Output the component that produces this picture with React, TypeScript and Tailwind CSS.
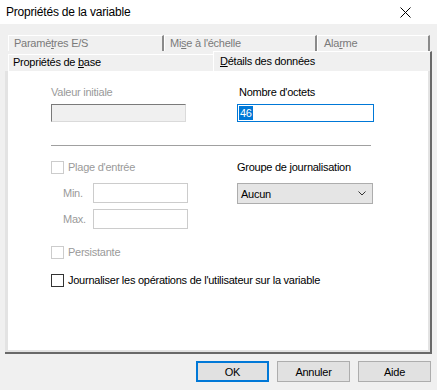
export default function App() {
  const disabled = "text-[#9a9a9a]";
  return (
    <div className="w-[437px] h-[390px] bg-[#f0f0f0] flex flex-col font-['Liberation_Sans',Arial,sans-serif] text-[11px] tracking-[-0.25px] text-black select-none overflow-hidden">
      {/* Title bar */}
      <div className="h-[24px] bg-white flex items-center justify-between pl-[6px] pr-[26px]">
        <span className="text-[12px] leading-[14px] tracking-[-0.2px] text-black">Propriétés de la variable</span>
        <svg width="11" height="11" viewBox="0 0 11 11" className="block">
          <path d="M0.5 0.5 L10.5 10.5 M10.5 0.5 L0.5 10.5" stroke="#000" strokeWidth="1" fill="none" />
        </svg>
      </div>

      {/* Tabs */}
      <div className="pt-[11px]">
        <div className="flex pl-[8px] h-[16px]">
          <div className="w-[156px] h-full bg-[#f0f0f0] border-t border-l border-white border-r-2 border-r-[#8a8a8a] pl-[5px] text-[#7a7a7a] leading-[14px]">
            Paramè<span className="underline">t</span>res E/S
          </div>
          <div className="w-[153px] h-full bg-[#f0f0f0] border-t border-l border-white border-r-2 border-r-[#8a8a8a] pl-[5px] text-[#7a7a7a] leading-[14px]">
            Mi<span className="underline">s</span>e à l'échelle
          </div>
          <div className="w-[113px] h-full bg-[#f0f0f0] border-t border-l border-white border-r-2 border-r-[#8a8a8a] pl-[6px] text-[#7a7a7a] leading-[14px]">
            Ala<span className="underline">r</span>me
          </div>
        </div>
        <div className="flex items-end h-[20px]">
          <div className="ml-[8px] w-[205px] h-[17px] bg-[#f0f0f0] border-t border-l border-white pl-[4px] leading-[15px]">
            Propriétés de <span className="underline">b</span>ase
          </div>
          <div className="w-[219px] h-[20px] bg-[#f0f0f0] border-t border-l border-white border-r-2 border-r-[#696969] pl-[6px] pt-[2px] leading-[15px]">
            <span className="underline">D</span>étails des données
          </div>
        </div>
      </div>

      {/* Panel */}
      <div className="ml-[5px] w-[427px] h-[283px] border-r-2 border-b-2 border-[#696969]">
        <div className="w-full h-full bg-white border-l-[3px] border-l-[#e3e3e3] border-r-2 border-b-2 border-[#e3e3e3] pl-[43px] pt-[14px]">
          {/* Row 1 */}
          <div className="flex">
            <div className="w-[135px] flex flex-col">
              <div className={`h-[14px] leading-[14px] ${disabled}`}>Valeur initiale</div>
              <div className="mt-[5px] h-[18px] bg-[#f0f0f0] border-t border-l border-[#7a7a7a] border-r border-b border-r-[#dadada] border-b-[#dadada]" />
            </div>
            <div className="ml-[51px] flex flex-col">
              <div className="h-[14px] leading-[14px] pl-[2px]">Nombre d'octets</div>
              <div className="mt-[5px] w-[137px] h-[18px] border border-[#0078d7] flex items-center pl-[1px]">
                <span className="bg-[#0078d7] text-white h-[14px] leading-[14px] px-[1px]">46</span>
              </div>
            </div>
          </div>

          {/* Separator */}
          <div className="mt-[23px] w-[320px] h-px bg-[#a0a0a0]" />

          {/* Row 2 */}
          <div className="flex mt-[14px]">
            <div className="w-[137px] flex flex-col">
              <div className="flex items-center h-[14px] gap-[4px]">
                <div className="w-[13px] h-[13px] border border-[#cccccc] bg-white" />
                <span className={`leading-[14px] ${disabled}`}>Plage d'entrée</span>
              </div>
              <div className="flex items-center mt-[9px] h-[20px]">
                <span className={`w-[42px] pl-[12px] leading-[14px] ${disabled}`}>Min.</span>
                <div className="w-[95px] h-[20px] border border-[#cccccc] bg-white" />
              </div>
              <div className="flex items-center mt-[6px] h-[20px]">
                <span className={`w-[42px] pl-[12px] leading-[14px] ${disabled}`}>Max.</span>
                <div className="w-[95px] h-[20px] border border-[#cccccc] bg-white" />
              </div>
            </div>
            <div className="ml-[49px] flex flex-col">
              <div className="h-[14px] leading-[14px]">Groupe de journalisation</div>
              <div className="mt-[9px] w-[136px] h-[21px] bg-[#e5e5e5] border border-[#adadad] flex items-center justify-between pl-[3px] pr-[6px]">
                <span className="leading-[14px]">Aucun</span>
                <svg width="8" height="5" viewBox="0 0 8 5" className="block">
                  <path d="M0.5 0.5 L4 4 L7.5 0.5" stroke="#333" strokeWidth="1" fill="none" />
                </svg>
              </div>
            </div>
          </div>

          {/* Persistante */}
          <div className="flex items-center h-[14px] gap-[4px] mt-[16px]">
            <div className="w-[13px] h-[13px] border border-[#cccccc] bg-white" />
            <span className={`leading-[14px] ${disabled}`}>Persistante</span>
          </div>

          {/* Journaliser */}
          <div className="flex items-center h-[14px] gap-[4px] mt-[14px]">
            <div className="w-[13px] h-[13px] border border-[#333333] bg-white" />
            <span className="leading-[14px]">Journaliser les opérations de l'utilisateur sur la variable</span>
          </div>
        </div>
      </div>

      {/* Buttons */}
      <div className="flex justify-end gap-[8px] pr-[6px] pt-[7px]">
        <button className="w-[73px] h-[21px] bg-[#e1e1e1] border-2 border-[#0078d7] leading-[14px]">OK</button>
        <button className="w-[73px] h-[21px] bg-[#e1e1e1] border border-[#adadad] leading-[14px]">Annuler</button>
        <button className="w-[73px] h-[21px] bg-[#e1e1e1] border border-[#adadad] leading-[14px]">Aide</button>
      </div>
    </div>
  );
}
